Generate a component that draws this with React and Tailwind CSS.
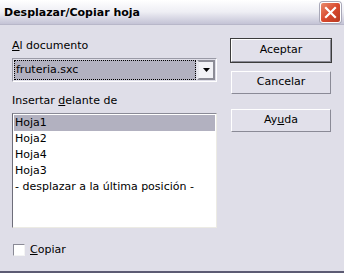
import React from "react";

const font = { fontFamily: '"DejaVu Sans", "Liberation Sans", sans-serif' };

const Btn = ({ children, isDefault }) => (
    <div className={isDefault ? "border border-[#3c3c3c]" : "border border-transparent"}>
        <div className="h-[23px] flex items-center justify-center bg-[#e1e0ea] border border-t-white border-l-white border-r-[#8a8a96] border-b-[#8a8a96] text-[11px] text-black">
            {children}
        </div>
    </div>
);

const App = () => {
    const items = ["Hoja1", "Hoja2", "Hoja4", "Hoja3", "- desplazar a la última posición -"];

    return (
        <div style={font} className="w-[344px] h-[273px] flex flex-col bg-[#dfdee8] border-b-2 border-[#5c5b73] overflow-hidden">
            {/* Title bar */}
            <div className="h-[25px] flex items-center justify-between pl-[4px] pr-[3px] bg-gradient-to-b from-[#ffffff] via-[#eeeef4] to-[#c4c3d6] border-b border-[#b8b7c9]">
                <span className="text-[11px] font-bold text-black leading-none">Desplazar/Copiar hoja</span>
                <div className="w-[21px] h-[21px] rounded-[3px] border border-white bg-gradient-to-br from-[#e88a6c] via-[#d9492e] to-[#b83a22] flex items-center justify-center shadow-[0_0_0_1px_#a8a8b8]">
                    <svg width="13" height="13" viewBox="0 0 13 13">
                        <path d="M2 2 L11 11 M11 2 L2 11" stroke="white" strokeWidth="2.2" strokeLinecap="square" />
                    </svg>
                </div>
            </div>

            {/* Body */}
            <div className="flex-1 flex pl-[12px]">
                <div className="w-[205px] flex flex-col pt-[14px]">
                    <div className="text-[11px] leading-[13px] text-black">
                        <span className="underline">A</span>l documento
                    </div>
                    <div className="mt-[6px] h-[24px] flex border border-t-[#9a9aa6] border-l-[#9a9aa6] border-b-white border-r-white">
                        <div className="flex-1 m-[1px] bg-[#b2b1c0] border border-dotted border-black flex items-center pl-[1px] text-[11px] text-black">
                            fruteria.sxc
                        </div>
                        <div className="w-[18px] my-[1px] mr-[1px] bg-[#f2f2f6] border-2 border-t-[#8c8c96] border-l-[#e8e8ee] border-r-[#8c8c96] border-b-[#8c8c96] flex items-center justify-center">
                            <svg width="7" height="4" viewBox="0 0 7 4">
                                <path d="M0 0 L7 0 L3.5 4 Z" fill="black" />
                            </svg>
                        </div>
                    </div>

                    <div className="mt-[12px] text-[11px] leading-[13px] text-black">
                        Insertar <span className="underline">d</span>elante de
                    </div>
                    <div className="mt-[6px] h-[115px] bg-white border border-t-[#8a8a96] border-l-[#6e6e7a] border-b-[#ecebe4] border-r-[#ecebe4] pt-[1px] pl-[1px] pr-[1px]">
                        {items.map((it, i) => (
                            <div
                                key={it}
                                className={
                                    "h-[16px] flex items-center pl-[1px] text-[11px] text-black " +
                                    (i === 0 ? "bg-[#b2b1c0]" : "")
                                }
                            >
                                {it}
                            </div>
                        ))}
                    </div>

                    <div className="mt-[15px] flex items-center">
                        <div className="ml-[1px] w-[12px] h-[12px] bg-white border border-t-[#8a8a96] border-l-[#8a8a96] border-b-[#f4f4f4] border-r-[#f4f4f4]" />
                        <span className="ml-[5px] text-[11px] leading-[13px] text-black">
                            <span className="underline">C</span>opiar
                        </span>
                    </div>
                </div>

                {/* Buttons */}
                <div className="w-[102px] ml-[13px] flex flex-col pt-[13px]">
                    <Btn isDefault>Aceptar</Btn>
                    <div className="mt-[7px]">
                        <Btn>Cancelar</Btn>
                    </div>
                    <div className="mt-[13px]">
                        <Btn>
                            Ay<span className="underline">u</span>da
                        </Btn>
                    </div>
                </div>
            </div>
        </div>
    );
};

export default App;
